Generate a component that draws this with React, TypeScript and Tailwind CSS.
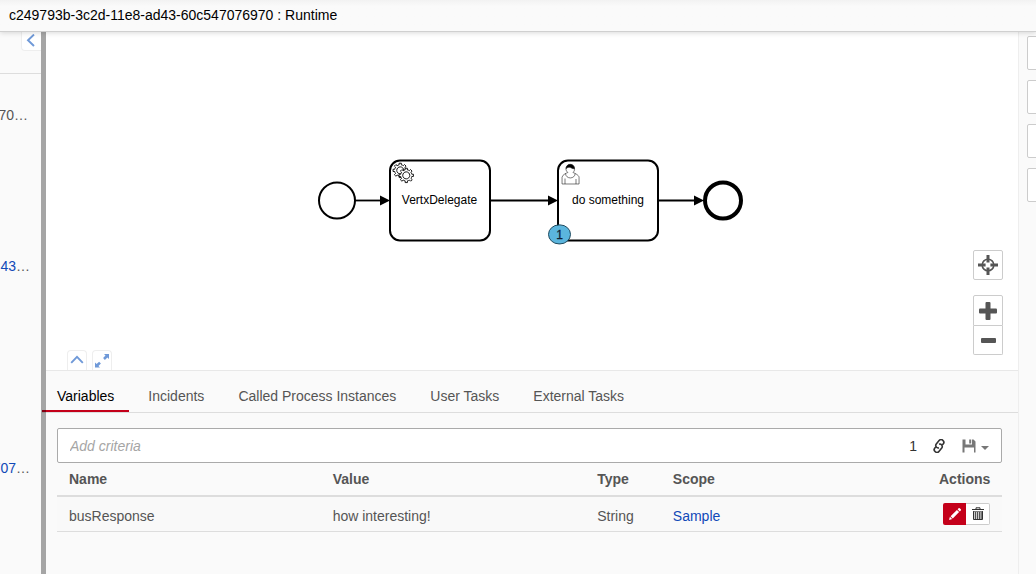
import React, { useState } from "react";

const gear =
  "v -1.71335 c 0.352326,-0.0705 0.703932,-0.17838 1.047628,-0.32133 0.344416,-0.14465 0.665822,-0.32133 0.966377,-0.52145 l 1.19431,1.18005 1.567487,-1.57688 -1.195028,-1.18014 c 0.403376,-0.61394 0.683079,-1.29908 0.825447,-2.01824 l 1.622133,-0.01 v -2.2196 l -1.636514,0.01 c -0.07333,-0.35153 -0.178319,-0.70024 -0.323564,-1.04372 -0.145244,-0.34406 -0.321407,-0.6644 -0.522735,-0.96217 l 1.131035,-1.13631 -1.583305,-1.56293 -1.129598,1.13589 c -0.614052,-0.40108 -1.302883,-0.68093 -2.022633,-0.82247 l 0.0093,-1.61852 h -2.241173 l 0.0042,1.63124 c -0.353763,0.0736 -0.705369,0.17977 -1.049785,0.32371 -0.344415,0.14437 -0.665102,0.32092 -0.9635006,0.52006 l -1.1698628,-1.15823 -1.5667691,1.5684 1.1684265,1.15669 c -0.4026573,0.61283 -0.68308,1.29797 -0.8247287,2.01713 l -1.6588041,0.003 v 2.22174 l 1.6724648,-0.006 c 0.073327,0.35077 0.1797598,0.70243 0.3242851,1.04472 0.1452428,0.34448 0.3214064,0.6644 0.5227339,0.96066 l -1.1993431,1.19723 1.5840256,1.56011 1.1964668,-1.19348 c 0.6140517,0.40346 1.3028827,0.68232 2.0233517,0.82331 l 7.19e-4,1.69892 h 2.226848 z m 0.221462,-3.9957 c -1.788948,0.7502 -3.8576,-0.0928 -4.6097055,-1.87438 -0.7521065,-1.78321 0.090598,-3.84627 1.8802645,-4.59604 1.78823,-0.74936 3.856881,0.0929 4.608987,1.87437 0.752106,1.78165 -0.0906,3.84612 -1.879546,4.59605 z";

function Arrow({ from, to }: { from: number; to: number }) {
  return (
    <g>
      <path d={`M${from} 169.5H${to - 8}`} stroke="#000" strokeWidth="1.8" />
      <path d={`M${to - 10} 164.5L${to} 169.5L${to - 10} 174.5Z`} fill="#000" />
    </g>
  );
}

function ProcessDiagram() {
  return (
    <svg
      viewBox="0 1 972 338"
      className="block h-full w-full font-['Liberation_Sans',Arial,sans-serif] text-xs"
      role="img"
      aria-label="Process diagram"
      fill="none"
    >
      <circle cx="291" cy="169.5" r="18" stroke="#000" strokeWidth="2" />
      <Arrow from={309} to={344} />
      <rect x="344" y="129.5" width="100" height="80" rx="10" stroke="#000" strokeWidth="2" />
      <path d={`M355.4 146.6 ${gear}`} stroke="#000" strokeWidth="0.9" fill="#fff" />
      <circle cx="360.4" cy="144.6" r="4" fill="#fff" />
      <path d={`M361.4 151.6 ${gear}`} stroke="#000" strokeWidth="0.9" fill="#fff" />
      <text x="393.5" y="173" textAnchor="middle" fill="#000">
        VertxDelegate
      </text>
      <Arrow from={445} to={512} />
      <rect x="512" y="129.5" width="100" height="80" rx="10" stroke="#000" strokeWidth="2" />
      <g stroke="#222" strokeWidth="0.6">
        <path d="M527 141.5c0.909,-0.845 1.594,-2.049 1.594,-3.385 0,-2.554 -1.805,-4.622 -4.357,-4.622 -2.552,0 -4.288,2.068 -4.288,4.622 0,1.348 0.974,2.562 1.896,3.405 -0.529,0.187 -5.669,2.097 -5.794,4.756 v6.718 h17 v-6.718 c0,-2.298 -5.528,-4.595 -6.051,-4.776z m-8,6 l0,5.5 m11,0 l0,-5" />
        <path d="M527 141.5 m2.162,1.009 c0,2.447 -2.158,4.431 -4.821,4.431 -2.663,0 -4.822,-1.981 -4.822,-4.431" />
        <path
          d="M527 141.5 m-6.9,-3.8 c0,0 2.25,-2.358 4.274,-1.177 2.024,1.181 4.221,1.537 4.124,0.965 -0.098,-0.57 -0.117,-3.791 -4.191,-4.136 -3.572,0.001 -4.14,2.95 -4.207,4.348z"
          fill="#000"
        />
      </g>
      <text x="562" y="173" textAnchor="middle" fill="#000">
        do something
      </text>
      <rect x="502.5" y="193.9" width="22" height="19" rx="10.5" fill="#5bb5dd" stroke="#1c4a60" />
      <text x="513.5" y="208" textAnchor="middle" fill="#123" stroke="#123" strokeWidth="0.3">
        1
      </text>
      <Arrow from={613} to={658} />
      <circle cx="677" cy="169.5" r="18" stroke="#000" strokeWidth="4" />
    </svg>
  );
}

function CrosshairIcon() {
  return (
    <svg width="20" height="20" viewBox="0 0 20 20" fill="none" stroke="#555" aria-hidden="true">
      <circle cx="10" cy="10" r="5.8" strokeWidth="1.6" />
      <path d="M10 0V7.6M10 12.4V20M0 10H7.6M12.4 10H20" strokeWidth="3" />
    </svg>
  );
}

function PlusIcon() {
  return (
    <svg width="20" height="20" viewBox="0 0 20 20" fill="#555" aria-hidden="true">
      <rect x="7.5" y="1" width="5" height="18" rx="1" />
      <rect x="1" y="7.5" width="18" height="5" rx="1" />
    </svg>
  );
}

function MinusIcon() {
  return (
    <svg width="20" height="20" viewBox="0 0 20 20" fill="#555" aria-hidden="true">
      <rect x="3" y="8" width="15" height="5" rx="1" />
    </svg>
  );
}

function LinkIcon() {
  return (
    <svg width="14" height="14" viewBox="0 0 14 14" fill="none" stroke="#333" strokeWidth="1.6" aria-hidden="true">
      <g transform="rotate(-50 7 7)">
        <path d="M9.8 8.9H11.2A2.4 2.4 0 0 0 11.2 3.6H6.8A2.5 2.5 0 0 0 5.6 8.2" />
        <path d="M4.2 5.1H2.8A2.4 2.4 0 0 0 2.8 10.4H7.2A2.5 2.5 0 0 0 8.4 5.8" />
      </g>
    </svg>
  );
}

function SaveIcon() {
  return (
    <svg width="14" height="14" viewBox="0 0 14 14" fill="#777" aria-hidden="true">
      <path d="M0.5 0.5H3.5V5.5H10V0.5H11.5L13.5 2.5V13.5H12V8.5H2.5V13.5H0.5Z" />
      <rect x="7.2" y="0.5" width="2" height="4" />
    </svg>
  );
}

function PencilIcon() {
  return (
    <svg width="14" height="14" viewBox="0 0 14 14" fill="#fff" aria-hidden="true">
      <path d="M10.6 1.2a.8.8 0 0 1 1.1 0l1.1 1.1a.8.8 0 0 1 0 1.1l-1 1-2.2-2.2zM8.9 2.9l2.2 2.2-6.3 6.3-2.2-2.2zM1.9 9.8l2.3 2.3-3.2.9z" />
    </svg>
  );
}

function TrashIcon() {
  return (
    <svg width="14" height="14" viewBox="0 0 14 14" fill="none" stroke="#333" aria-hidden="true">
      <path d="M1 2.5H13" />
      <path d="M5 2.5V0.8H9V2.5" />
      <path d="M2 4.5H12" />
      <path d="M2.5 4.5V12.5H11.5V4.5" fill="#ccc" />
      <path d="M4.5 5V12.5M6.5 5V12.5M8.5 5V12.5M10.2 5V12.5" strokeWidth="0.8" />
    </svg>
  );
}

function ChevronIcon({ direction }: { direction: "left" | "up" }) {
  return (
    <svg width="14" height="14" viewBox="0 0 14 14" fill="none" stroke="#6f99d8" strokeWidth="1.9" aria-hidden="true">
      <path d={direction === "left" ? "M9 0.5L3 6.2L9 12" : "M1.2 8.8L7 2.8L12.8 8.8"} />
    </svg>
  );
}

function ExpandIcon() {
  return (
    <svg width="14" height="14" viewBox="0 0 14 14" fill="#6f99d8" aria-hidden="true">
      <path d="M9 0H14V5L12.4 3.5L9.9 5.9L8.1 4.1L10.5 1.6Z" />
      <path d="M5 13.6H0V8.6L1.6 10.1L4.1 7.7L5.9 9.5L3.5 12Z" />
    </svg>
  );
}

const tabs = ["Variables", "Incidents", "Called Process Instances", "User Tasks", "External Tasks"];
const mapButton = "flex w-[30px] items-center justify-center border border-[#ccc] bg-white";
const paneButton = "flex w-5 items-center justify-center border border-[#eee] bg-white";

export default function App() {
  const [active, setActive] = useState("Variables");

  return (
    <div className="flex min-h-screen flex-col bg-[#fafafa] font-['Liberation_Sans',Arial,sans-serif] text-sm leading-5 text-[#555]">
      <header className="relative z-20 border-b border-[#d0d0d0] bg-linear-to-b from-[#f2f2f2] to-[#fafafa] to-20% px-[9px] pt-[5px] pb-[6px] text-black shadow-[0_1px_5px_rgba(0,0,0,0.15)]">
        <h1>c249793b-3c2d-11e8-ad43-60c547076970 : Runtime</h1>
      </header>

      <div className="flex flex-1">
        <aside className="relative w-[41px] shrink-0 overflow-hidden">
          <div className="flex h-[42px] items-start justify-end border-b border-[#ddd]">
            <button type="button" aria-label="Collapse sidebar" className={`${paneButton} h-[19px] rounded-bl border-t-0 border-r-0`}>
              <ChevronIcon direction="left" />
            </button>
          </div>
          <div className="flex flex-col items-end pt-[31px] whitespace-nowrap">
            <p className="pr-[13px] pb-[131px]">70…</p>
            <p className="pr-[11px] pb-[182px]">
              <a href="#definition" className="text-[#1149b8]">43</a>…
            </p>
            <p className="pr-[11px]">
              <a href="#parent" className="text-[#1149b8]">707</a>…
            </p>
          </div>
        </aside>

        <div className="relative z-10 w-[5px] shrink-0 bg-black/34" />

        <main className="min-w-0 flex-1">
          <section className="relative h-[338px] bg-white">
            <ProcessDiagram />
            <div className="absolute top-[218px] right-[15px] flex flex-col">
              <button type="button" aria-label="Reset view" className={`${mapButton} mb-[15px] h-[30px] rounded-xs`}>
                <CrosshairIcon />
              </button>
              <button type="button" aria-label="Zoom in" className={`${mapButton} h-[31px] rounded-t-xs`}>
                <PlusIcon />
              </button>
              <button type="button" aria-label="Zoom out" className={`${mapButton} h-[29px] rounded-b-xs border-t-0`}>
                <MinusIcon />
              </button>
            </div>
            <div className="absolute bottom-0 left-[21px] flex gap-[5px]">
              <button type="button" aria-label="Collapse panel" className={`${paneButton} h-5 rounded-t border-b-0`}>
                <ChevronIcon direction="up" />
              </button>
              <button type="button" aria-label="Maximize panel" className={`${paneButton} h-5 rounded-t border-b-0`}>
                <ExpandIcon />
              </button>
            </div>
          </section>

          <section className="border-t border-[#e8e8e8]">
            <div role="tablist" className="-ml-1 flex gap-1 border-b border-[#ddd]">
              {tabs.map((tab) => (
                <button
                  key={tab}
                  type="button"
                  role="tab"
                  aria-selected={tab === active}
                  onClick={() => setActive(tab)}
                  className={`border-b-2 px-[15px] pt-[15px] pb-1 whitespace-nowrap ${
                    tab === active ? "border-[#c4001a] text-black" : "border-transparent"
                  }`}
                >
                  {tab}
                </button>
              ))}
            </div>

            <div className="pt-[15px] pr-4 pl-[11px]">
              <div className="flex h-[35px] items-center rounded-xs border border-[#aaa] bg-white pr-3 pl-3">
                <input
                  type="text"
                  aria-label="Add criteria"
                  placeholder="Add criteria"
                  className="min-w-0 flex-1 bg-transparent outline-none placeholder:text-[#a5a5a5] placeholder:italic"
                />
                <span className="text-[#333]">1</span>
                <button type="button" aria-label="Copy link" className="ml-[15px]">
                  <LinkIcon />
                </button>
                <button type="button" aria-label="Saved queries" className="ml-4 flex items-center gap-[5px]">
                  <SaveIcon />
                  <svg width="8" height="8" viewBox="0 0 8 8" fill="#777" aria-hidden="true">
                    <path d="M0 4H8L4 8Z" />
                  </svg>
                </button>
              </div>

              <table className="w-full table-fixed border-separate border-spacing-0 text-left">
                <colgroup>
                  <col className="w-[27.9%]" />
                  <col className="w-[28%]" />
                  <col className="w-[8%]" />
                  <col />
                  <col className="w-[75px]" />
                </colgroup>
                <thead>
                  <tr className="[&>th]:border-b-2 [&>th]:border-[#ddd] [&>th]:px-3 [&>th]:py-[6px] [&>th]:font-bold">
                    <th>Name</th>
                    <th>Value</th>
                    <th>Type</th>
                    <th>Scope</th>
                    <th>Actions</th>
                  </tr>
                </thead>
                <tbody>
                  <tr className="bg-[#f9f9f9] [&>td]:h-[35px] [&>td]:border-b [&>td]:border-[#ddd] [&>td]:px-3">
                    <td className="pt-1">busResponse</td>
                    <td className="pt-1">how interesting!</td>
                    <td className="pt-1">String</td>
                    <td className="pt-1">
                      <a href="#sample" className="text-[#1149b8]">Sample</a>
                    </td>
                    <td>
                      <div className="flex justify-end">
                        <button type="button" aria-label="Edit variable" className="flex h-[22px] w-[23px] items-center justify-center rounded-l-xs bg-[#c4001a]">
                          <PencilIcon />
                        </button>
                        <button type="button" aria-label="Delete variable" className="flex h-[22px] w-6 items-center justify-center rounded-r-xs border border-l-0 border-[#ccc] bg-white">
                          <TrashIcon />
                        </button>
                      </div>
                    </td>
                  </tr>
                </tbody>
              </table>
            </div>
          </section>
        </main>

        <aside className="flex w-[18px] shrink-0 flex-col gap-[10px] overflow-hidden border-l border-[#eee] pt-1 pl-2">
          {["Edit", "Suspend", "Cancel", "Retry"].map((action) => (
            <button
              key={action}
              type="button"
              aria-label={action}
              className="h-[34px] w-9 shrink-0 rounded-xs border border-[#ccc] bg-white"
            />
          ))}
        </aside>
      </div>
    </div>
  );
}
